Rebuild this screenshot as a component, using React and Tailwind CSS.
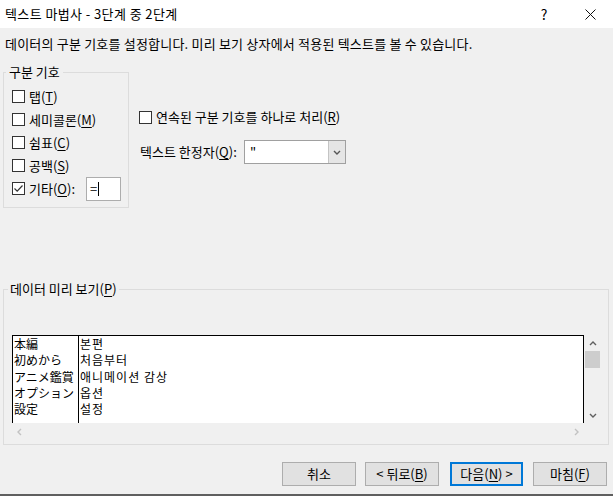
import React from 'react';

const U = ({ children }) => <span className="underline underline-offset-[2px]">{children}</span>;

function Check({ checked }) {
  return (
    <span className="w-[13px] h-[13px] border border-[#333333] bg-white flex items-center justify-center shrink-0">
      {checked && (
        <svg width="11" height="11" viewBox="0 0 11 11">
          <path d="M1.5 5.5 L4.2 8.2 L9.5 2.5" fill="none" stroke="#333333" strokeWidth="1.2" />
        </svg>
      )}
    </span>
  );
}

function Chevron({ dir = 'down', color = '#606060', size = 8 }) {
  const d = {
    up: 'M1 6 L4 3 L7 6',
    down: 'M1 3 L4 6 L7 3',
    left: 'M5 1 L2 4 L5 7',
    right: 'M3 1 L6 4 L3 7',
  }[dir];
  return (
    <svg width={size} height={size} viewBox="0 0 8 8">
      <path d={d} fill="none" stroke={color} strokeWidth="1.4" />
    </svg>
  );
}

const rows = [
  ['本編', '본편'],
  ['初めから', '처음부터'],
  ['アニメ鑑賞', '애니메이션 감상'],
  ['オプション', '옵션'],
  ['設定', '설정'],
];

function Btn({ children, primary }) {
  return (
    <button
      className={
        'w-full h-[24px] bg-[#e1e1e1] text-[13px] leading-[16px] text-black flex items-center justify-center ' +
        (primary ? 'border-2 border-[#0078d7]' : 'border border-[#adadad]')
      }
    >
      {children}
    </button>
  );
}

export default function App() {
  return (
    <div className="w-[613px] h-[496px] overflow-hidden font-['Noto_Sans_CJK_KR','Noto_Sans',sans-serif] text-black select-none">
      {/* title bar */}
      <div className="h-[28px] bg-white flex items-center">
        <span className="pl-[5px] text-[13px] leading-[16px] tracking-[0.4px]">텍스트 마법사 - 3단계 중 2단계</span>
        <div className="ml-auto flex h-full">
          <div className="w-[46px] flex items-center justify-center text-[14px]">?</div>
          <div className="w-[46px] flex items-center justify-center">
            <svg width="11" height="11" viewBox="0 0 11 11">
              <path d="M0.5 0.5 L10.5 10.5 M10.5 0.5 L0.5 10.5" stroke="#111" strokeWidth="1" />
            </svg>
          </div>
        </div>
      </div>

      {/* body */}
      <div className="bg-[#f0f0f0] h-[468px] border-b-2 border-[#5f5f5f] flex flex-col text-[13px] leading-[16px]">
        <p className="pt-[8px] px-[5px] tracking-[0.2px]">
          데이터의 구분 기호를 설정합니다. 미리 보기 상자에서 적용된 텍스트를 볼 수 있습니다.
        </p>

        <div className="mt-[12px] flex items-start pl-[3px]">
          <fieldset className="w-[126px] h-[144px] border border-[#dcdcdc] px-[2px]">
            <legend className="px-[3px]">구분 기호</legend>
            <div className="pt-[5px]">
              {[
                ['탭(', 'T', ')'],
                ['세미콜론(', 'M', ')'],
                ['쉼표(', 'C', ')'],
                ['공백(', 'S', ')'],
              ].map(([a, k, b]) => (
                <div key={k} className="h-[23px] flex items-center pl-[6px] gap-[4px]">
                  <Check />
                  <span>
                    {a}
                    <U>{k}</U>
                    {b}
                  </span>
                </div>
              ))}
              <div className="h-[23px] flex items-center pl-[6px] gap-[4px]">
                <Check checked />
                <span className="w-[53px]">
                  기타(<U>O</U>):
                </span>
                <div className="w-[35px] h-[24px] bg-white border border-[#adadad] flex items-center pl-[3px]">
                  =<span className="ml-[1px] w-px h-[14px] bg-black" />
                </div>
              </div>
            </div>
          </fieldset>

          <div className="ml-[10px] flex flex-col">
            <div className="mt-[45px] h-[16px] flex items-center gap-[4px]">
              <Check />
              <span>
                연속된 구분 기호를 하나로 처리(<U>R</U>)
              </span>
            </div>
            <div className="mt-[15px] h-[24px] flex items-center">
              <span className="w-[105px] pl-px">
                텍스트 한정자(<U>Q</U>):
              </span>
              <div className="w-[102px] h-[24px] bg-white border border-[#a0a0a0] flex">
                <span className="flex-1 pl-[5px] leading-[22px]">"</span>
                <span className="w-[17px] border-l border-[#c4c4c4] bg-[#e5e5e5] flex items-center justify-center">
                  <Chevron dir="down" color="#555" />
                </span>
              </div>
            </div>
          </div>
        </div>

        <fieldset className="mt-[73px] ml-[3px] w-[606px] h-[164px] border border-[#dcdcdc] px-[4px]">
          <legend className="px-[2px]">
            데이터 미리 보기(<U>P</U>)
          </legend>
          <div className="mt-[38px] ml-[4px] w-[589px] h-[105px] flex flex-col">
            <div className="h-[88px] flex">
              <div className="w-[572px] bg-white border-t border-x border-black flex font-['Noto_Sans_CJK_JP','Noto_Sans_CJK_KR',monospace] text-[12px] leading-[16.3px]">
                <div className="w-[66px] border-r border-black overflow-hidden">
                  {rows.map(r => (
                    <div key={r[0]} className="h-[16.3px] pl-[1px] whitespace-nowrap">{r[0]}</div>
                  ))}
                </div>
                <div className="flex-1 tracking-[1px]">
                  {rows.map(r => (
                    <div key={r[1]} className="h-[16.3px] pl-[1px] whitespace-nowrap">{r[1]}</div>
                  ))}
                </div>
              </div>
              <div className="w-[17px] flex flex-col items-center">
                <div className="h-[16px] flex items-center justify-center">
                  <Chevron dir="up" />
                </div>
                <div className="w-[15px] h-[17px] bg-[#cdcdcd]" />
                <div className="flex-1" />
                <div className="h-[16px] flex items-center justify-center">
                  <Chevron dir="down" />
                </div>
              </div>
            </div>
            <div className="h-[17px] w-[572px] flex items-center justify-between px-[4px]">
              <Chevron dir="left" color="#c2c2c2" />
              <Chevron dir="right" color="#c2c2c2" />
            </div>
          </div>
        </fieldset>

        <div className="mt-[17px] flex pr-[6px] justify-end">
          <div className="w-[74px]">
            <Btn>취소</Btn>
          </div>
          <div className="w-[74px] ml-[9px]">
            <Btn>
              &lt; 뒤로(<U>B</U>)
            </Btn>
          </div>
          <div className="w-[73px] ml-[11px]">
            <Btn primary>
              다음(<U>N</U>) &gt;
            </Btn>
          </div>
          <div className="w-[74px] ml-[10px]">
            <Btn>
              마침(<U>F</U>)
            </Btn>
          </div>
        </div>
      </div>
    </div>
  );
}
